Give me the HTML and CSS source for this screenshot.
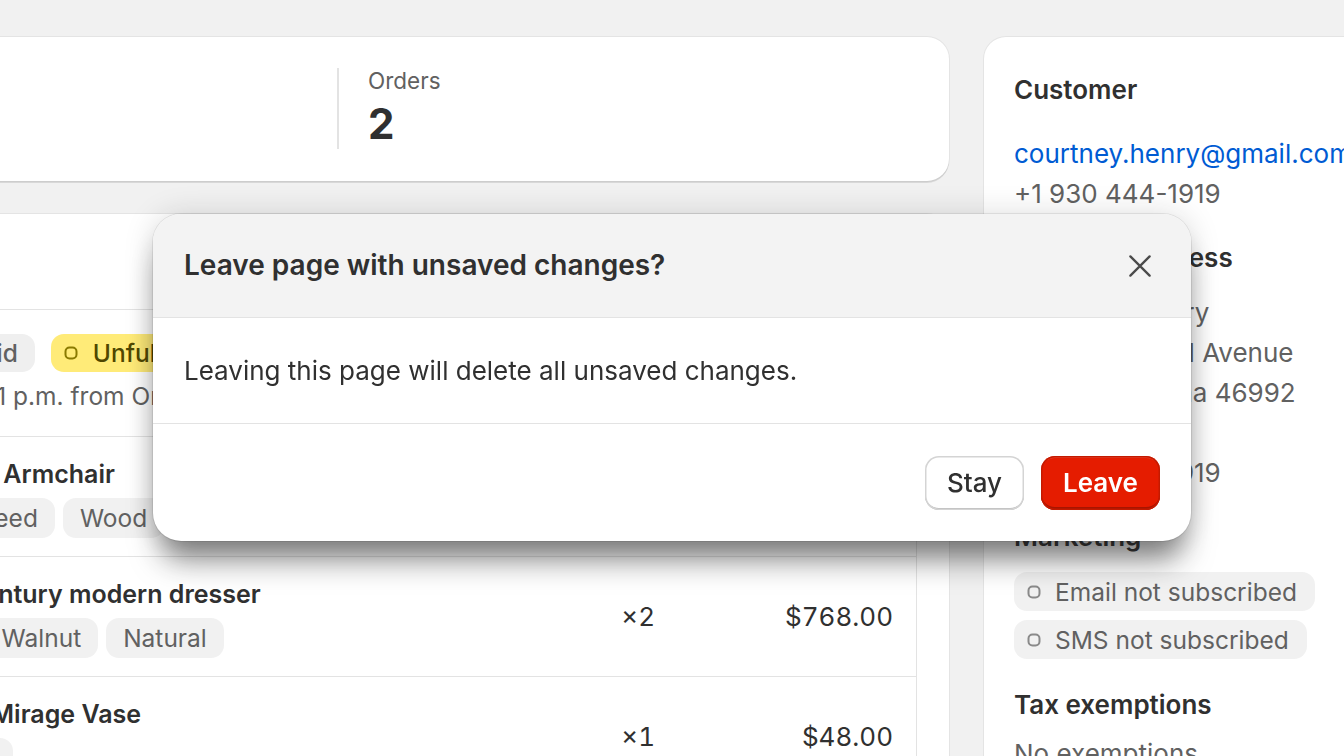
FILE: index.html
```html
<!DOCTYPE html>
<html lang="en">
<head>
    <meta charset="UTF-8">
    <meta name="viewport" content="width=device-width, initial-scale=1.0">
    <title>Customer · Courtney Henry</title>
    <link rel="stylesheet" href="styles.css">
</head>
<body>

    <div class="page">

        <div class="main-col">

            <!-- Summary numbers -->
            <section class="card stats">
                <div class="stat"></div>
                <div class="stat">
                    <span class="stat-label">Orders</span>
                    <span class="stat-value">2</span>
                </div>
            </section>

            <!-- Last order -->
            <section class="card order">
                <div class="order-head">
                    <button class="btn-plain">View all orders</button>
                </div>

                <div class="order-meta">
                    <div class="badges">
                        <span class="badge">
                            <svg viewBox="0 0 18 18" width="18" height="18"><circle cx="9" cy="9" r="7" fill="currentColor"/></svg>
                            Paid
                        </span>
                        <span class="badge badge-attention">
                            <svg viewBox="0 0 14 14" width="14" height="14"><rect x="1.5" y="1.5" width="11" height="11" rx="4" fill="none" stroke="currentColor" stroke-width="2"/></svg>
                            Unfulfilled
                        </span>
                    </div>
                    <p class="meta-text">Fri, 1:21 p.m. from Online Store</p>
                </div>

                <div class="items">
                    <div class="item">
                        <div class="item-info">
                            <div class="item-name">Wicker Armchair</div>
                            <div class="tags">
                                <span class="tag">Pale reed</span>
                                <span class="tag">Wood</span>
                            </div>
                        </div>
                        <div class="item-qty">×1</div>
                        <div class="item-price">$1,280.00</div>
                    </div>
                    <div class="item">
                        <div class="item-info">
                            <div class="item-name">Mid-century modern dresser</div>
                            <div class="tags">
                                <span class="tag">XL</span>
                                <span class="tag">Walnut</span>
                                <span class="tag">Natural</span>
                            </div>
                        </div>
                        <div class="item-qty">×2</div>
                        <div class="item-price">$768.00</div>
                    </div>
                    <div class="item">
                        <div class="item-info">
                            <div class="item-name">Storm Mirage Vase</div>
                            <div class="tags">
                                <span class="tag">Stone</span>
                            </div>
                        </div>
                        <div class="item-qty">×1</div>
                        <div class="item-price">$48.00</div>
                    </div>
                </div>
            </section>

        </div>

        <!-- Customer details -->
        <aside class="card customer">
            <h2 class="heading heading-first">Customer</h2>
            <div class="lines contact">
                <a href="#" class="link">courtney.henry@gmail.com</a>
                <span>+1 930 444-1919</span>
            </div>

            <h2 class="heading">Shipping address</h2>
            <div class="lines">
                <span>Courtney Henry</span>
                <span>451 Sunset Hill Avenue</span>
                <span>Fishers, Indiana 46992</span>
                <span>United States</span>
                <span>+1 930 444-1919</span>
            </div>

            <h2 class="heading">Marketing</h2>
            <div class="pill-list">
                <span class="pill">
                    <svg viewBox="0 0 14 14" width="14" height="14"><rect x="1.5" y="1.5" width="11" height="11" rx="4" fill="none" stroke="currentColor" stroke-width="2"/></svg>
                    Email not subscribed
                </span>
                <span class="pill">
                    <svg viewBox="0 0 14 14" width="14" height="14"><rect x="1.5" y="1.5" width="11" height="11" rx="4" fill="none" stroke="currentColor" stroke-width="2"/></svg>
                    SMS not subscribed
                </span>
            </div>

            <h2 class="heading heading-tax">Tax exemptions</h2>
            <div class="lines lines-tight">
                <span>No exemptions</span>
            </div>
        </aside>

    </div>

    <!-- Unsaved changes dialog -->
    <div class="modal" role="dialog" aria-labelledby="modal-title">
        <header class="modal-head">
            <h2 id="modal-title">Leave page with unsaved changes?</h2>
            <button class="modal-close" aria-label="Close">
                <svg viewBox="0 0 24 24" width="24" height="24">
                    <path d="M1.5 1.5 L22.5 22.5 M22.5 1.5 L1.5 22.5" stroke="currentColor" stroke-width="2.5" stroke-linecap="round" fill="none"/>
                </svg>
            </button>
        </header>
        <div class="modal-body">
            <p>Leaving this page will delete all unsaved changes.</p>
        </div>
        <footer class="modal-foot">
            <button class="btn btn-secondary">Stay</button>
            <button class="btn btn-critical">Leave</button>
        </footer>
    </div>

</body>
</html>
```

FILE: styles.css
```css
/* --- Base --- */

html, body {
    margin: 0;
    padding: 0;
    height: 100%;
    overflow: hidden;
    background-color: #f1f1f1;
    color: #303030;
    font-family: Inter, "Noto Sans", sans-serif;
    font-size: 26px;
    line-height: 40px;
}

button {
    font-family: inherit;
}

p {
    margin: 0;
}

/* --- Page columns --- */

.page {
    display: flex;
    gap: 35px;
    padding-top: 37px;
    margin-left: -135px; /* the view starts partway into the main column */
}

.main-col {
    flex: 0 0 1084px;
    display: flex;
    flex-direction: column;
    gap: 33px;
}

.card {
    background-color: white;
    border-radius: 22px;
    box-shadow:
        0 0 0 1px rgba(0, 0, 0, 0.05),
        0 2px 0 0 rgba(0, 0, 0, 0.1);
}

/* --- Stats --- */

.stats {
    display: grid;
    grid-template-columns: 472px 1fr;
    padding: 31px 0 32px;
}

.stat {
    display: flex;
    flex-direction: column;
    min-height: 79px;
}

.stat + .stat {
    border-left: 2px solid #e3e3e3;
    padding-left: 29px;
}

.stat-label {
    color: #616161;
    font-size: 22.5px;
    line-height: 26px;
}

.stat-value {
    font-size: 42px;
    font-weight: 700;
    line-height: 50px;
    margin-top: 5px;
}

/* --- Order card --- */

.order {
    padding: 0 32px;
    overflow: hidden;
    height: 600px;
}

.order-head {
    height: 95px;
    margin: 0 -32px;
    padding: 0 32px;
    border-bottom: 1px solid #e3e3e3;
    display: flex;
    justify-content: flex-end;
    align-items: center;
}

.btn-plain {
    border: none;
    background: none;
    color: #005bd3;
    font-size: 24px;
    cursor: pointer;
}

.order-meta {
    padding: 24px 0 20px 24px;
}

.badges {
    display: flex;
    gap: 16px;
}

.badge {
    display: inline-flex;
    align-items: center;
    gap: 15px;
    height: 38px;
    padding: 0 17px 0 13px;
    border-radius: 13px;
    background-color: #efefef;
    color: #616161;
    font-size: 24.5px;
    font-weight: 500;
}

.badge svg {
    flex-shrink: 0;
}

.badge-attention {
    background-color: #ffeb78;
    color: #4f4700;
}

.badge-attention svg {
    color: #8a7a00;
}

.meta-text {
    color: #616161;
    font-size: 24.5px;
    margin-top: 4px;
}

.items {
    border: 1px solid #e3e3e3;
    border-radius: 22px 22px 0 0;
}

.item {
    display: grid;
    grid-template-columns: 1fr 80px 238px;
    align-items: center;
    height: 119px;
    padding: 0 23px 0 14px;
    box-sizing: border-box;
}

.item + .item {
    border-top: 1px solid #e3e3e3;
    height: 120px;
}

.item-name {
    font-size: 25px;
    font-weight: 600;
    line-height: 36px;
    white-space: nowrap;
}

.tags {
    display: flex;
    gap: 8px;
    margin-top: 6px;
}

.tag {
    height: 40px;
    line-height: 40px;
    padding: 0 17px;
    border-radius: 13px;
    background-color: #f1f1f1;
    color: #616161;
    font-size: 24.5px;
    white-space: nowrap;
}

.item-qty,
.item-price {
    text-align: right;
    font-variant-numeric: tabular-nums;
}

/* --- Customer card --- */

.customer {
    flex: 0 0 420px;
    height: 800px;
    padding: 35px 30px 0;
    box-sizing: border-box;
    border-radius: 22px 0 0 0;
}

.heading {
    margin: 26px 0 18px;
    font-size: 26px;
    font-weight: 600;
    line-height: 35px;
}

.heading-first {
    margin-top: 0;
    margin-bottom: 27px;
}

.heading-tax {
    margin-top: 28px;
    margin-bottom: 12px;
}

.lines {
    display: flex;
    flex-direction: column;
    color: #616161;
    white-space: nowrap;
}

.link {
    color: #005bd3;
    text-decoration: none;
}

.pill-list {
    display: flex;
    flex-direction: column;
    align-items: flex-start;
    gap: 9px;
}

.pill {
    display: flex;
    align-items: center;
    gap: 14px;
    width: max-content;
    height: 39px;
    padding: 0 18px 0 13px;
    border-radius: 13px;
    background-color: #f1f1f1;
    color: #616161;
    font-size: 24.5px;
    white-space: nowrap;
}

.pill svg {
    color: #8a8a8a;
}

/* --- Dialog --- */

.modal {
    position: fixed;
    left: 153px;
    top: 214px;
    width: 1038px;
    background-color: white;
    border-radius: 28px;
    overflow: hidden;
    box-shadow:
        0 0 0 1px rgba(0, 0, 0, 0.08),
        0 26px 30px -8px rgba(26, 26, 26, 0.55),
        0 0 30px rgba(26, 26, 26, 0.15);
}

.modal-head {
    height: 103px;
    padding: 0 31px;
    background-color: #f3f3f3;
    border-bottom: 1px solid #e3e3e3;
    display: flex;
    justify-content: space-between;
    align-items: center;
}

.modal-head h2 {
    margin: 0;
    font-size: 28px;
    font-weight: 600;
    line-height: 35px;
}

.modal-close {
    width: 40px;
    height: 40px;
    padding: 0;
    border: none;
    background: none;
    color: #4a4a4a;
    display: flex;
    justify-content: center;
    align-items: center;
    cursor: pointer;
}

.modal-close svg {
    width: 22px;
    height: 22px;
}

.modal-body {
    height: 105px;
    padding: 0 31px;
    border-bottom: 1px solid #e3e3e3;
    display: flex;
    align-items: center;
}

.modal-foot {
    height: 117px;
    padding: 0 31px;
    display: flex;
    justify-content: flex-end;
    align-items: center;
    gap: 17px;
}

.btn {
    height: 54px;
    padding: 0 22px;
    border: none;
    border-radius: 14px;
    font-size: 26px;
    cursor: pointer;
}

.btn-secondary {
    background-color: white;
    color: #303030;
    font-weight: 500;
    box-shadow:
        inset 0 0 0 1.5px #d4d4d4,
        inset 0 -2px 0 #b5b5b5;
}

.btn-critical {
    background-color: #e51c00;
    color: white;
    font-weight: 600;
    box-shadow:
        inset 0 0 0 1.5px #c41a00,
        inset 0 -3px 0 #a81500,
        inset 0 2px 0 rgba(255, 255, 255, 0.2);
}
```
